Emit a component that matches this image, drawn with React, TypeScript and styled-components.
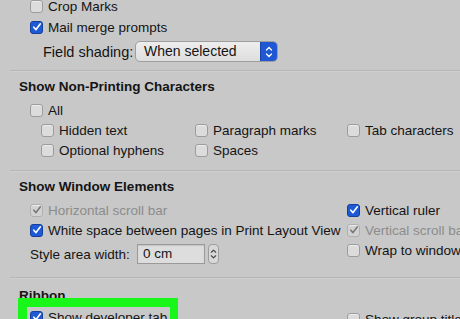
import React from "react";
import styled, { createGlobalStyle, css } from "styled-components";

const GlobalStyle = createGlobalStyle`
  html, body {
    margin: 0;
    padding: 0;
    background: #c8c8c8;
  }
  body {
    font-family: "Liberation Sans", Arial, sans-serif;
    color: #141414;
    overflow: hidden;
  }
`;

const Page = styled.div`
  width: 460px;
  height: 319px;
  overflow: hidden;
  background: #c8c8c8;
  font-size: 13.5px;
`;

const Section = styled.div<{ $top?: number; $bottom?: number }>`
  margin-top: ${(p) => Math.min(p.$top ?? 0, 0)}px;
  padding: ${(p) => Math.max(p.$top ?? 0, 0)}px 0 ${(p) => p.$bottom ?? 0}px 19px;
`;

const Separator = styled.div`
  height: 1px;
  margin-left: 10px;
  background: #b6b6b6;
  border-bottom: 1px solid #cfcfcf;
`;

const Heading = styled.div`
  font-weight: bold;
  line-height: 16px;
  height: 16px;
  margin-bottom: 5px;
`;

const Row = styled.label<{ $indent?: number; $muted?: boolean }>`
  display: flex;
  align-items: center;
  gap: 5px;
  height: 20px;
  margin-left: ${(p) => p.$indent ?? 11}px;
  white-space: nowrap;
  color: ${(p) => (p.$muted ? "#8c8c8c" : "#141414")};
`;

const Box = styled.span<{ $state: "on" | "off" | "disabled" }>`
  display: inline-flex;
  align-items: center;
  justify-content: center;
  width: 13px;
  height: 13px;
  box-sizing: border-box;
  border-radius: 3px;
  flex-shrink: 0;
  ${(p) =>
    p.$state === "on"
      ? css`
          background: #1f5ad6;
          border: 1px solid #163f9c;
        `
      : css`
          background: #dcdcdc;
          border: 1px solid #9c9c9c;
          box-shadow: inset 0 1px 0 #ececec;
        `}
  ${(p) =>
    p.$state === "disabled" &&
    css`
      background: #d2d2d2;
      border-color: #b0b0b0;
    `}
`;

const Checkbox = ({ state }: { state: "on" | "off" | "disabled" }) => (
  <Box $state={state}>
    {state !== "off" && (
      <svg width="10" height="10" viewBox="0 0 10 10">
        <path
          d="M1.8 5.2 L4 7.6 L8.4 1.8"
          fill="none"
          stroke={state === "on" ? "#fff" : "#7a7a7a"}
          strokeWidth="1.6"
          strokeLinecap="round"
          strokeLinejoin="round"
        />
      </svg>
    )}
  </Box>
);

const FieldRow = styled.div<{ $indent: number }>`
  display: flex;
  align-items: center;
  margin-left: ${(p) => p.$indent}px;
  white-space: nowrap;
`;

const FieldLabel = styled.span<{ $width: number; $size?: number }>`
  width: ${(p) => p.$width}px;
  flex-shrink: 0;
  ${(p) => p.$size && `font-size: ${p.$size}px;`}
`;

const Select = styled.div`
  display: flex;
  align-items: stretch;
  width: 143px;
  height: 21px;
  box-sizing: border-box;
  border: 1px solid #9e9e9e;
  border-radius: 5px;
  background: linear-gradient(#ededed, #dedede);
  overflow: hidden;
  font-size: 14px;
`;

const SelectText = styled.span`
  flex: 1;
  padding-left: 8px;
  line-height: 19px;
`;

const BlueStepper = styled.span`
  width: 16px;
  display: flex;
  align-items: center;
  justify-content: center;
  background: #2058d4;
  border-left: 1px solid #1a45a8;
`;

const TextInput = styled.div`
  width: 68px;
  height: 20px;
  box-sizing: border-box;
  border: 1px solid #9a9a9a;
  background: #dddddd;
  padding-left: 5px;
  line-height: 18px;
  box-shadow: inset 0 1px 1px #c4c4c4;
`;

const GrayStepper = styled.span`
  width: 11px;
  height: 20px;
  margin-left: 3px;
  box-sizing: border-box;
  border: 1px solid #9e9e9e;
  border-radius: 4px;
  background: #d8d8d8;
  display: flex;
  align-items: center;
  justify-content: center;
`;

const Chevrons = ({ color, w }: { color: string; w: number }) => (
  <svg width={w} height="14" viewBox="0 0 8 14">
    <path
      d="M1.5 5 L4 2.5 L6.5 5 M1.5 9 L4 11.5 L6.5 9"
      fill="none"
      stroke={color}
      strokeWidth="1.3"
      strokeLinecap="round"
      strokeLinejoin="round"
    />
  </svg>
);

const Grid = styled.div<{ $indent: number; $cols: string }>`
  display: grid;
  grid-template-columns: ${(p) => p.$cols};
  margin-left: ${(p) => p.$indent}px;
`;

const Column = styled.div`
  display: flex;
  flex-direction: column;
`;

const RibbonHeading = styled(Heading)`
  margin-bottom: 0;
`;

const Highlight = styled.div`
  border: 9px solid #19f619;
  border-right-width: 8px;
  margin: -6px 0 0 -12px;
  padding: 0 0 0 3px;
  width: 140px;
  background: #c8c8c8;
`;

const RibbonRow = styled.div`
  display: grid;
  grid-template-columns: 317px auto;
  margin-left: 11px;
  align-items: start;
`;

const RightCell = styled.div`
  padding-top: 5px;
`;

export default function App() {
  return (
    <Page>
      <GlobalStyle />
      <Section $top={-4} $bottom={8}>
        <Row>
          <Checkbox state="off" />
          Crop Marks
        </Row>
        <Row style={{ marginTop: 1 }}>
          <Checkbox state="on" />
          Mail merge prompts
        </Row>
        <FieldRow $indent={24} style={{ marginTop: 4 }}>
          <FieldLabel $width={92} $size={14.5}>
            Field shading:
          </FieldLabel>
          <Select>
            <SelectText>When selected</SelectText>
            <BlueStepper>
              <Chevrons color="#fff" w={8} />
            </BlueStepper>
          </Select>
        </FieldRow>
      </Section>
      <Separator />
      <Section $top={7} $bottom={10}>
        <Heading>Show Non-Printing Characters</Heading>
        <Row>
          <Checkbox state="off" />
          All
        </Row>
        <Grid $indent={22} $cols="154px 152px auto">
          <Column>
            <Row $indent={0}>
              <Checkbox state="off" />
              Hidden text
            </Row>
            <Row $indent={0}>
              <Checkbox state="off" />
              Optional hyphens
            </Row>
          </Column>
          <Column>
            <Row $indent={0}>
              <Checkbox state="off" />
              Paragraph marks
            </Row>
            <Row $indent={0}>
              <Checkbox state="off" />
              Spaces
            </Row>
          </Column>
          <Column>
            <Row $indent={0}>
              <Checkbox state="off" />
              Tab characters
            </Row>
          </Column>
        </Grid>
      </Section>
      <Separator />
      <Section $top={7} $bottom={13}>
        <Heading>Show Window Elements</Heading>
        <Grid $indent={11} $cols="317px auto">
          <Column>
            <Row $indent={0} $muted>
              <Checkbox state="disabled" />
              Horizontal scroll bar
            </Row>
            <Row $indent={0}>
              <Checkbox state="on" />
              White space between pages in Print Layout View
            </Row>
            <FieldRow $indent={0} style={{ marginTop: 4 }}>
              <FieldLabel $width={107}>Style area width:</FieldLabel>
              <TextInput>0 cm</TextInput>
              <GrayStepper>
                <Chevrons color="#444" w={7} />
              </GrayStepper>
            </FieldRow>
          </Column>
          <Column>
            <Row $indent={0}>
              <Checkbox state="on" />
              Vertical ruler
            </Row>
            <Row $indent={0} $muted>
              <Checkbox state="disabled" />
              Vertical scroll bar
            </Row>
            <Row $indent={0}>
              <Checkbox state="off" />
              Wrap to window
            </Row>
          </Column>
        </Grid>
      </Section>
      <Separator />
      <Section $top={9}>
        <RibbonHeading>Ribbon</RibbonHeading>
        <RibbonRow>
          <Highlight>
            <Row $indent={0}>
              <Checkbox state="on" />
              Show developer tab
            </Row>
          </Highlight>
          <RightCell>
            <Row $indent={0}>
              <Checkbox state="off" />
              Show group titles
            </Row>
          </RightCell>
        </RibbonRow>
      </Section>
    </Page>
  );
}
